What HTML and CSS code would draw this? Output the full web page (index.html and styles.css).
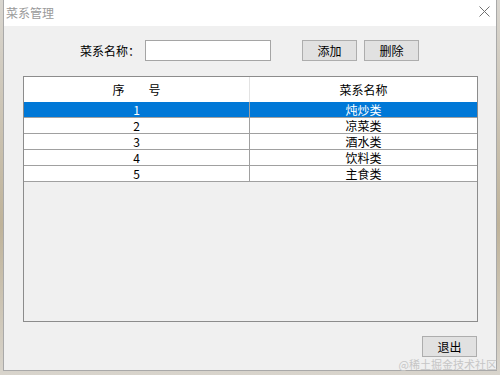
FILE: index.html
```html
<!doctype html>
<html>
<head>
<meta charset="utf-8">
<title>菜系管理</title>
<link rel="stylesheet" href="styles.css">
</head>
<body>
<div class="desk">
	<div class="window">
		<div class="titlebar">
			<span class="title">菜系管理</span>
			<svg class="close" width="11" height="11" viewBox="0 0 11 11"><path d="M0.5 0.5L10.5 10.5M10.5 0.5L0.5 10.5" stroke="#707070" stroke-width="1" fill="none"/></svg>
		</div>
		<div class="content">
			<div class="form-row">
				<label class="label">菜系名称：</label>
				<input class="name-input" type="text">
				<button class="btn btn-add">添加</button>
				<button class="btn">删除</button>
			</div>
			<div class="grid">
				<table class="list">
					<tr>
						<th class="col1">序&emsp;&emsp;号</th>
						<th>菜系名称</th>
					</tr>
					<tr class="selected"><td class="col1">1</td><td>炖炒类</td></tr>
					<tr><td class="col1">2</td><td>凉菜类</td></tr>
					<tr><td class="col1">3</td><td>酒水类</td></tr>
					<tr><td class="col1">4</td><td>饮料类</td></tr>
					<tr><td class="col1">5</td><td>主食类</td></tr>
				</table>
			</div>
			<div class="footer">
				<button class="btn">退出</button>
			</div>
		</div>
	</div>
	<div class="watermark">@稀土掘金技术社区</div>
</div>
</body>
</html>
```

FILE: styles.css
```css
* { box-sizing: border-box; }
body { margin: 0; background: #cfcac0; font-family: "Noto Sans CJK SC", sans-serif; font-size: 12px; color: #000; }
.desk { position: relative; width: 500px; height: 375px; overflow: hidden;
	background: linear-gradient(#d9d6d0, #bfb39a 60%, #d8d4cc); }
.window { margin-left: 3px; width: 494px; height: 371px; background: #f0f0f0; border: 1px solid #a9a9a9; border-top: none; }
.titlebar { height: 26px; background: #fff; display: flex; align-items: center; justify-content: space-between; padding: 0 6px 0 2px; }
.title { color: #9a9a9a; font-size: 12px; line-height: 26px; }
.close { margin-top: -3px; }
.content { padding-top: 14px; }
.form-row { display: flex; align-items: center; height: 21px; padding-left: 76px; }
.label { width: 65px; line-height: 21px; }
.name-input { width: 126px; height: 21px; border: 1px solid #a5a5a5; background: #fff; margin: 0; padding: 0 3px; outline: none; }
.btn { width: 55px; height: 21px; margin: 0; padding: 0; border: 1px solid #adadad; background: #e1e1e1; font-family: "Noto Sans CJK SC", sans-serif; font-size: 12px; color: #000; line-height: 19px; }
.btn-add { margin-left: 31px; margin-right: 7px; }
.grid { margin: 15px 0 0 19px; width: 455px; height: 246px; border: 1px solid #8c8c8c; background: #f0f0f0; }
.list { width: 100%; border-collapse: separate; border-spacing: 0; table-layout: fixed; }
.list th { font-weight: normal; background: #fff; line-height: 25px; padding: 0; text-align: center; }
.list th.col1 { border-right: 1px solid #e3e3e3; }
.list td { line-height: 15px; padding: 0; text-align: center; background: #fff; border-bottom: 1px solid #a0a0a0; }
.list .col1 { width: 226px; }
.list td.col1 { border-right: 1px solid #a0a0a0; }
.list .selected td { background: #0078d7; color: #fff; }
.footer { display: flex; justify-content: flex-end; padding-right: 19px; margin-top: 14px; }
.watermark { position: absolute; right: 3px; bottom: 4px; font-size: 11px; color: #c6c6c6; line-height: 13px; }
```
